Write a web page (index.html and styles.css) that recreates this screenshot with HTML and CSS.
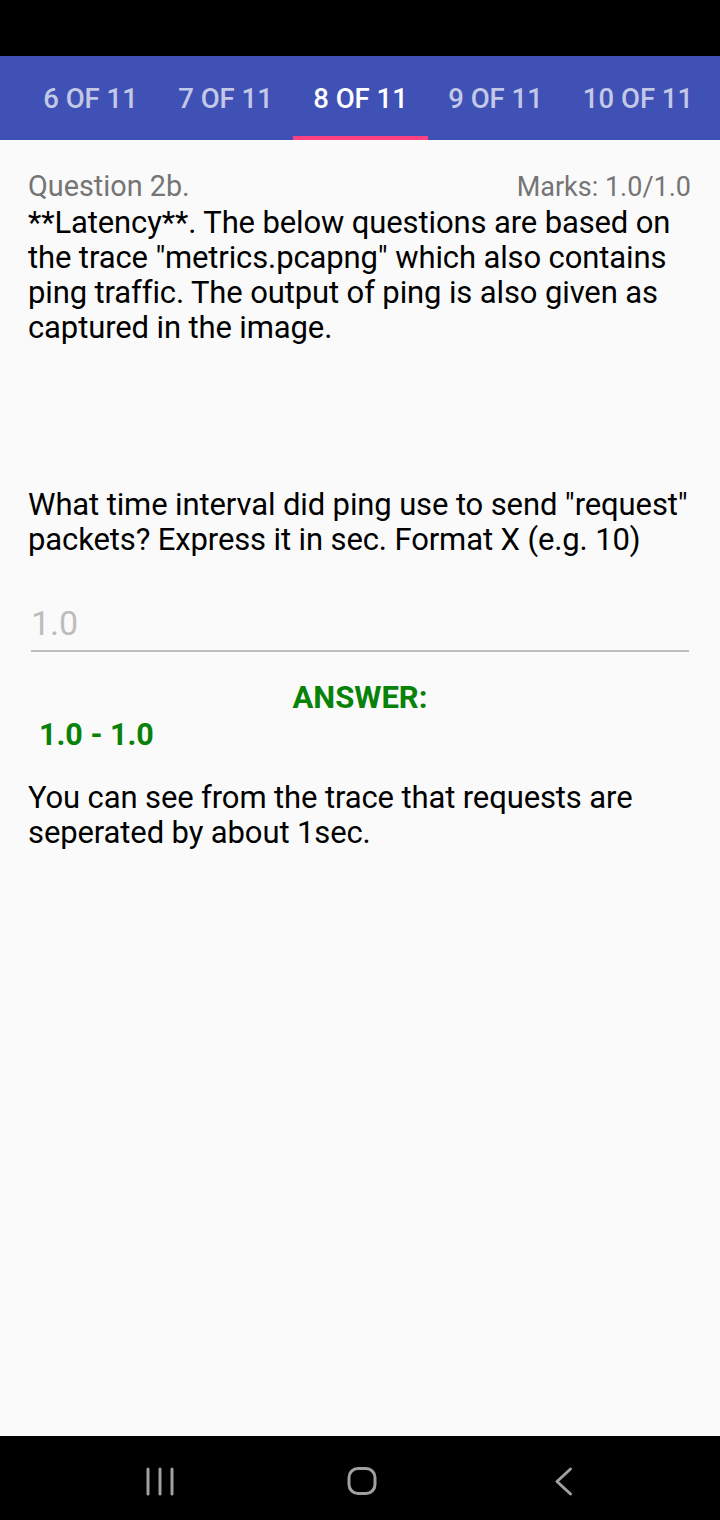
FILE: index.html
```html
<!DOCTYPE html>
<html>
<head>
<meta charset="utf-8">
<link rel="stylesheet" href="styles.css">
</head>
<body>
<div class="screen">
  <div class="status"></div>
  <nav class="tabs">
    <div class="tab">6 OF 11</div>
    <div class="tab">7 OF 11</div>
    <div class="tab active">8 OF 11</div>
    <div class="tab">9 OF 11</div>
    <div class="tab wide">10 OF 11</div>
  </nav>
  <main class="content">
    <div class="qhead">
      <span class="qnum">Question 2b.</span>
      <span class="marks">Marks: 1.0/1.0</span>
    </div>
    <p class="qtext">**Latency**. The below questions are based on the trace "metrics.pcapng" which also contains ping traffic. The output of ping is also given as captured in the image.</p>
    <p class="qtext sub">What time interval did ping use to send "request" packets? Express it in sec. Format X (e.g. 10)</p>
    <div class="field">1.0</div>
    <div class="answer-label">ANSWER:</div>
    <div class="answer-value">1.0 - 1.0</div>
    <p class="qtext expl">You can see from the trace that requests are seperated by about 1sec.</p>
  </main>
  <div class="navbar">
    <svg class="nav-icon" width="40" height="40" viewBox="0 0 40 40"><g stroke="#a0a0a0" stroke-width="3" stroke-linecap="round"><line x1="8" y1="8" x2="8" y2="33"/><line x1="20" y1="8" x2="20" y2="33"/><line x1="32" y1="8" x2="32" y2="33"/></g></svg>
    <svg class="nav-icon" width="40" height="40" viewBox="0 0 40 40"><rect x="7" y="7.5" width="26" height="25" rx="9" fill="none" stroke="#a0a0a0" stroke-width="3"/></svg>
    <svg class="nav-icon" width="40" height="40" viewBox="0 0 40 40"><polyline points="26.5,8 13,20.5 26.5,33" fill="none" stroke="#a0a0a0" stroke-width="3" stroke-linecap="round" stroke-linejoin="round"/></svg>
  </div>
</div>
</body>
</html>
```
FILE: styles.css
```css
* { box-sizing: border-box; }
html, body { margin: 0; padding: 0; }
body {
  font-family: Roboto, "Noto Sans", sans-serif;
  background: #fafafa;
}
.screen {
  width: 720px;
  height: 1520px;
  display: flex;
  flex-direction: column;
  background: #fafafa;
}
.status { height: 56px; background: #000; flex: none; }
.tabs {
  height: 84px;
  flex: none;
  background: #3f51b5;
  display: flex;
  padding-left: 23px;
  overflow: hidden;
}
.tab {
  width: 135px;
  flex: none;
  display: flex;
  align-items: center;
  justify-content: center;
  color: rgba(255,255,255,0.7);
  font-weight: 500;
  font-size: 27.5px;
  border-bottom: 4px solid transparent;
  padding-top: 4px;
}
.tab.wide { width: 150px; }
.tab.active { color: #fff; border-bottom-color: #ff4081; }
.content {
  flex: 1;
  padding: 29px 24px 0 29px;
}
.qhead {
  display: flex;
  justify-content: space-between;
  align-items: baseline;
  color: #757575;
  font-size: 28.8px;
  line-height: 35px;
  margin-right: 5px;
}
.qnum { margin-left: -1px; }
.marks { font-size: 27px; }
.qtext {
  margin: 0;
  font-size: 31px;
  line-height: 35px;
  color: #000;
  margin-left: -1px;
  letter-spacing: -0.12px;
}
.sub { margin-top: 142px; }
.field {
  margin: 46px 7px 0 2px;
  color: #bdbdbd;
  font-size: 34px;
  line-height: 40px;
  padding-bottom: 7px;
  border-bottom: 2px solid #bdbdbd;
}
.answer-label {
  margin-top: 28px;
  text-align: center;
  color: #088208;
  font-weight: 700;
  font-size: 31px;
  line-height: 36px;
  margin-right: 5px;
}
.answer-value {
  margin-left: 10px;
  color: #088208;
  font-weight: 700;
  font-size: 30.5px;
  line-height: 38px;
}
.expl { margin-top: 26px; }
.navbar {
  height: 84px;
  flex: none;
  background: #000;
  display: flex;
  align-items: center;
  gap: 162px;
  padding-left: 140px;
  padding-top: 5px;
}
.nav-icon { display: block; }
```
